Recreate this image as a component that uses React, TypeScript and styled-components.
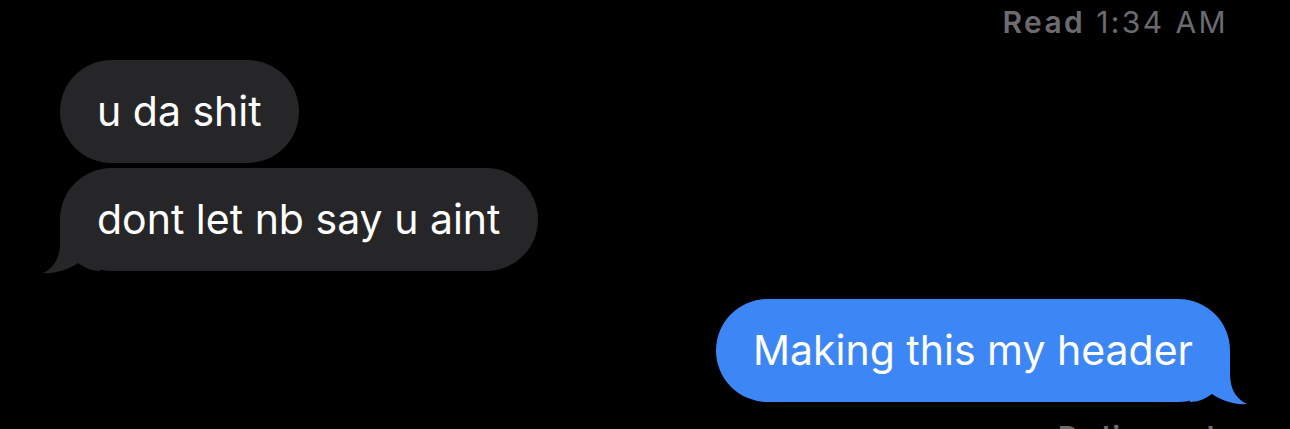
import React from "react";
import styled, { createGlobalStyle } from "styled-components";

const Global = createGlobalStyle`
  html, body { margin: 0; padding: 0; background: #000; }
  body { font-family: Inter, "Liberation Sans", sans-serif; -webkit-font-smoothing: antialiased; }
`;

const Screen = styled.div`
  width: 1290px;
  height: 429px;
  overflow: hidden;
  background: #000;
  display: flex;
  flex-direction: column;
  padding: 0 60px 0 60px;
  box-sizing: border-box;
`;

const Status = styled.div<{ $top: number }>`
  flex-shrink: 0;
  align-self: flex-end;
  margin-top: ${(p) => p.$top}px;
  margin-right: 2px;
  font-size: 30px;
  line-height: 34px;
  color: #6b6b70;
  letter-spacing: 2.4px;
  white-space: nowrap;
  b { font-weight: 600; margin-right: 11px; }
`;

const Bubble = styled.div<{ $mine?: boolean; $top: number }>`
  flex-shrink: 0;
  position: relative;
  align-self: ${(p) => (p.$mine ? "flex-end" : "flex-start")};
  margin-top: ${(p) => p.$top}px;
  height: 103px;
  display: flex;
  align-items: center;
  padding: 0 37px 2px 37px;
  box-sizing: border-box;
  border-radius: 52px;
  background: ${(p) => (p.$mine ? "#3d86f6" : "#262628")};
  color: #fff;
  font-size: 41px;
  white-space: nowrap;
`;

const Label = styled.span`
  position: relative;
  z-index: 1;
`;

const TailSvg = styled.svg<{ $side: "left" | "right" }>`
  position: absolute;
  bottom: -3px;
  width: 58px;
  height: 53px;
  ${(p) => (p.$side === "right" ? "right: -18px;" : "left: -18px; transform: scaleX(-1);")}
`;

function Tail({ side, color }: { side: "left" | "right"; color: string }) {
  return (
    <TailSvg $side={side} viewBox="0 0 58 53" aria-hidden>
      <path
        d="M40 0 L40 22 C40 39 48 48 57 52 C46 53 32 49 22 42 C15 47 8 50 0 50 L0 0 Z"
        fill={color}
      />
    </TailSvg>
  );
}

export default function App() {
  return (
    <>
      <Global />
      <Screen>
        <Status $top={5}>
          <b>Read</b>1:34 AM
        </Status>
        <Bubble $top={21}>
          <Label>u da shit</Label>
        </Bubble>
        <Bubble $top={5}>
          <Tail side="left" color="#262628" />
          <Label>dont let nb say u aint</Label>
        </Bubble>
        <Bubble $mine $top={28}>
          <Tail side="right" color="#3d86f6" />
          <Label>Making this my header</Label>
        </Bubble>
        <Status $top={18}>
          <b>Delivered</b>
        </Status>
      </Screen>
    </>
  );
}
